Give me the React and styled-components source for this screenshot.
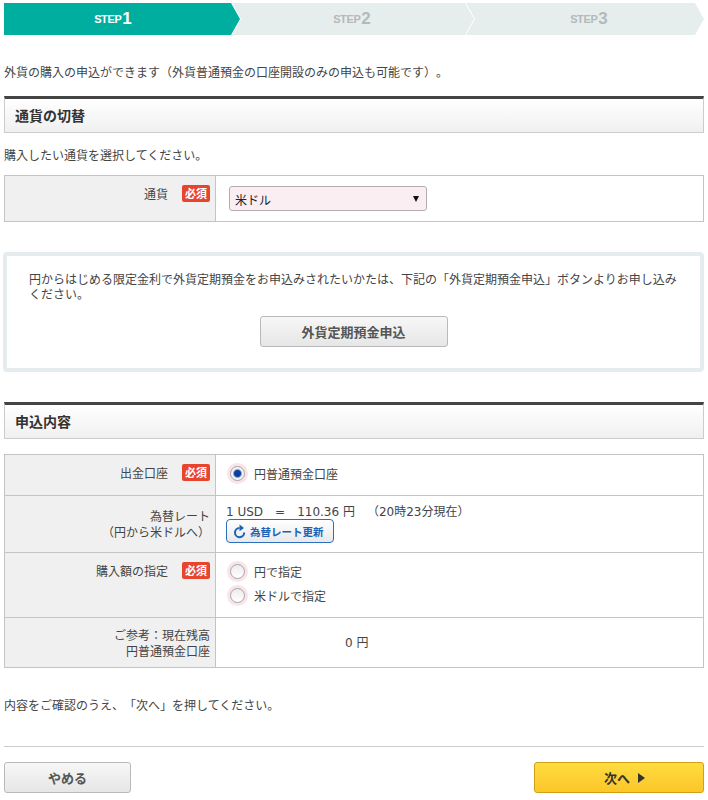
import React from 'react'
import styled, { createGlobalStyle } from 'styled-components'

const GlobalStyle = createGlobalStyle`
  body {
    margin: 0;
    background: #fff;
    color: #444;
    font-family: "Noto Sans CJK JP", "Liberation Sans", sans-serif;
    font-size: 12px;
    line-height: 14px;
    text-spacing-trim: space-all;
  }
`

const Page = styled.div`
  width: 700px;
  margin: 0 auto;
  padding-top: 3px;
`

const Steps = styled.ol`
  display: flex;
  height: 32px;
  margin: 0;
  padding: 0;
  list-style: none;
`

const Step = styled.li`
  flex: 0 0 ${(p) => p.$w}px;
  box-sizing: border-box;
  margin-left: ${(p) => (p.$first ? '0' : '-8px')};
  padding: ${(p) => p.$pad || '0'};
  display: flex;
  align-items: center;
  justify-content: center;
  gap: 1px;
  color: ${(p) => (p.$active ? '#fff' : '#b4b9b9')};
  background: ${(p) => (p.$active ? '#00ae9f' : '#e6eeed')};
  clip-path: polygon(
    0 0,
    calc(100% - 9px) 0,
    100% 50%,
    calc(100% - 9px) 100%,
    0 100%,
    ${(p) => (p.$first ? '0' : '9px')} 50%
  );
  font-family: "Liberation Sans", sans-serif;
  font-size: 11px;
  font-weight: 700;
  letter-spacing: -0.4px;

  b {
    font-size: 17px;
    letter-spacing: 0;
  }
`

const Lead = styled.p`
  margin: 30px 0 0;
  height: 14px;
  line-height: 14px;
`

const SectionTitle = styled.h2`
  box-sizing: border-box;
  height: 37px;
  margin: ${(p) => p.$top} 0 0;
  padding: 0 10px 2px;
  display: flex;
  align-items: center;
  border: 1px solid #ccc;
  border-top: 3px solid #444;
  background: linear-gradient(#fff, #f0f0f1);
  color: #333;
  font-size: 14px;
  font-weight: 700;
`

const Hint = styled.p`
  margin: 15px 0 0;
  height: 14px;
`

const FormTable = styled.table`
  width: 100%;
  margin-top: ${(p) => p.$top};
  border-collapse: collapse;
  table-layout: fixed;
`

const LabelCell = styled.th`
  box-sizing: border-box;
  width: 211px;
  height: ${(p) => p.$h};
  padding: 0 5px 0 0;
  border: 1px solid #c4c4c4;
  background: #f0f0f0;
  font-weight: 400;
  text-align: right;
  vertical-align: ${(p) => (p.$middle ? 'middle' : 'top')};
  line-height: 16px;
`

const LabelRow = styled.div`
  display: flex;
  justify-content: flex-end;
  align-items: center;
  gap: 14px;
  padding-top: 9px;
`

const Required = styled.span`
  width: 28px;
  height: 17px;
  border-radius: 2px;
  background: #e8452f;
  color: #fff;
  font-size: 11px;
  font-weight: 700;
  line-height: 17px;
  text-align: center;
`

const ValueCell = styled.td`
  padding: ${(p) => p.$pad || '0 0 0 10px'};
  border: 1px solid #c4c4c4;
  vertical-align: ${(p) => (p.$top ? 'top' : 'middle')};
`

const SelectWrap = styled.div`
  position: relative;
  width: 198px;
  height: 25px;
  margin-left: 3px;

  &::after {
    content: '';
    position: absolute;
    top: 10px;
    right: 8px;
    border-style: solid;
    border-width: 6px 3px 0;
    border-color: #111 transparent transparent;
    pointer-events: none;
  }
`

const Select = styled.select`
  appearance: none;
  box-sizing: border-box;
  width: 100%;
  height: 100%;
  padding: 3px 0 0 5px;
  border: 1px solid #b3adb0;
  border-radius: 3px;
  background: #fbeef3;
  color: #222;
  font: inherit;
`

const Notice = styled.section`
  box-sizing: border-box;
  width: 701px;
  height: 120px;
  margin: 30px 0 0 -1px;
  padding: 15px 22px 0;
  border: 4px solid #e6eced;
  border-radius: 4px;
  line-height: 15px;
`

const ButtonRow = styled.div`
  display: flex;
  justify-content: ${(p) => p.$justify || 'center'};
  margin-top: ${(p) => p.$top || '0'};
`

const GreyButton = styled.button`
  box-sizing: border-box;
  width: ${(p) => p.$w};
  height: 31px;
  border: 1px solid #b9b9b9;
  border-radius: 3px;
  background: linear-gradient(#f7f7f7, #e6e6e6);
  color: #555;
  font-family: inherit;
  font-size: 13px;
  font-weight: 700;
`

const YellowButton = styled(GreyButton)`
  display: flex;
  align-items: center;
  justify-content: center;
  gap: 8px;
  padding: 0 0 0 11px;
  border-color: #d3a012;
  background: linear-gradient(#ffdc3f, #fbc62a);
  color: #333;

  &::after {
    content: '';
    border-style: solid;
    border-width: 5px 0 5px 7px;
    border-color: transparent transparent transparent #333;
  }
`

const RadioLine = styled.label`
  display: flex;
  align-items: center;
  gap: 6px;
  height: 24px;
  margin-left: 1px;
`

const RadioMark = styled.span`
  box-sizing: border-box;
  display: flex;
  align-items: center;
  justify-content: center;
  width: 21px;
  height: 21px;
  border-radius: 50%;
  background: #fbe3ea;

  &::before {
    content: '';
    box-sizing: border-box;
    width: 15px;
    height: 15px;
    border: 1px solid #a5a5a5;
    border-radius: 50%;
    background: ${(p) =>
      p.$on
        ? 'radial-gradient(circle, #0f3e9e 0 3px, #8ea4cf 4px, #f4f4f4 5px)'
        : 'linear-gradient(#ececec, #fff)'};
  }
`

const RateLine = styled.div`
  height: 14px;
  font-family: "DejaVu Sans", "Noto Sans CJK JP", sans-serif;
  white-space: pre;
`

const RefreshButton = styled.button`
  box-sizing: border-box;
  display: flex;
  align-items: center;
  gap: 3px;
  width: 108px;
  height: 24px;
  margin-top: 0;
  padding: 0 0 0 6px;
  border: 1px solid #2a6fc0;
  border-radius: 4px;
  background: linear-gradient(#fff, #e9e9e9);
  color: #1a62b5;
  font-family: inherit;
  font-size: 10.5px;
  font-weight: 700;
`

const Balance = styled.div`
  padding-left: 119px;
  font-family: "DejaVu Sans", "Noto Sans CJK JP", sans-serif;
`

const Confirm = styled.p`
  margin: 30px 0 0;
  height: 14px;
`

const Divider = styled.hr`
  height: 1px;
  margin: 34px 0 0;
  border: 0;
  background: #ccc;
`

const RefreshIcon = () => (
  <svg width="14" height="15" viewBox="0 0 14 15" aria-hidden="true">
    <path d="M6.5 4 A4.6 4.6 0 1 0 11.2 8.6" fill="none" stroke="currentColor" strokeWidth="2" />
    <path d="M6.5 0.6 L11 3.9 L6.5 7.2 Z" fill="currentColor" />
  </svg>
)

const App = () => {
  return (
    <Page>
      <GlobalStyle />
      <Steps>
        <Step $first $active $w={236} $pad="0 18px 0 0">STEP<b>1</b></Step>
        <Step $w={242} $pad="0 2px 0 0">STEP<b>2</b></Step>
        <Step $w={238} $pad="0 0 0 8px">STEP<b>3</b></Step>
      </Steps>

      <Lead>外貨の購入の申込ができます（外貨普通預金の口座開設のみの申込も可能です）。</Lead>

      <SectionTitle $top="17px">通貨の切替</SectionTitle>
      <Hint>購入したい通貨を選択してください。</Hint>

      <FormTable $top="13px">
        <tbody>
          <tr>
            <LabelCell $h="46px">
              <LabelRow>通貨<Required>必須</Required></LabelRow>
            </LabelCell>
            <ValueCell>
              <SelectWrap>
                <Select defaultValue="usd">
                  <option value="usd">米ドル</option>
                </Select>
              </SelectWrap>
            </ValueCell>
          </tr>
        </tbody>
      </FormTable>

      <Notice>
        円からはじめる限定金利で外貨定期預金をお申込みされたいかたは、下記の「外貨定期預金申込」ボタンよりお申し込みください。
        <ButtonRow $top="15px">
          <GreyButton $w="188px">外貨定期預金申込</GreyButton>
        </ButtonRow>
      </Notice>

      <SectionTitle $top="30px">申込内容</SectionTitle>

      <FormTable $top="15px">
        <tbody>
          <tr>
            <LabelCell $h="41px">
              <LabelRow>出金口座<Required>必須</Required></LabelRow>
            </LabelCell>
            <ValueCell $pad="0 0 3px 10px">
              <RadioLine><RadioMark $on />円普通預金口座</RadioLine>
            </ValueCell>
          </tr>
          <tr>
            <LabelCell $h="57px" $middle>為替レート<br />（円から米ドルへ）</LabelCell>
            <ValueCell $top $pad="9px 0 0 10px">
              <RateLine>1 USD　=　110.36 円　（20時23分現在）</RateLine>
              <RefreshButton><RefreshIcon />為替レート更新</RefreshButton>
            </ValueCell>
          </tr>
          <tr>
            <LabelCell $h="65px">
              <LabelRow>購入額の指定<Required>必須</Required></LabelRow>
            </LabelCell>
            <ValueCell $pad="0 0 3px 10px">
              <RadioLine><RadioMark />円で指定</RadioLine>
              <RadioLine><RadioMark />米ドルで指定</RadioLine>
            </ValueCell>
          </tr>
          <tr>
            <LabelCell $h="50px" $middle>ご参考：現在残高<br />円普通預金口座</LabelCell>
            <ValueCell>
              <Balance>0 円</Balance>
            </ValueCell>
          </tr>
        </tbody>
      </FormTable>

      <Confirm>内容をご確認のうえ、「次へ」を押してください。</Confirm>
      <Divider />

      <ButtonRow $justify="space-between" $top="15px">
        <GreyButton $w="127px">やめる</GreyButton>
        <YellowButton $w="170px">次へ</YellowButton>
      </ButtonRow>
    </Page>
  )
}

export default App
